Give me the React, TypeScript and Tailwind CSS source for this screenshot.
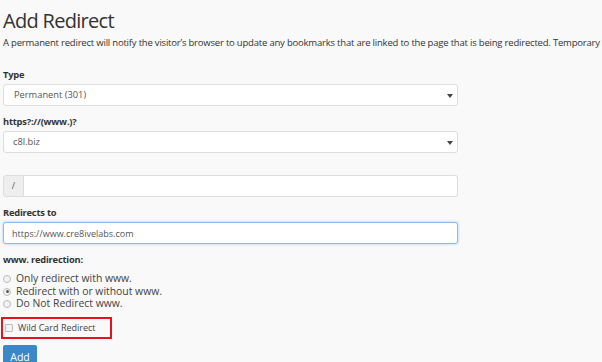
import { ChangeEvent, useState } from "react";

const font = { fontFamily: '"Open Sans", sans-serif' };

const Caret = () => (
  <svg width="6" height="5" viewBox="0 0 6 5" className="absolute right-[4px] top-[9px]">
    <path d="M0 0 H6 L3 4 Z" fill="#444" />
  </svg>
);

const App = () => {
  const [redirectTo, setRedirectTo] = useState("https://www.cre8ivelabs.com");
  const [www, setWww] = useState("both");

  const radios = [
    { id: "only", label: "Only redirect with www." },
    { id: "both", label: "Redirect with or without www." },
    { id: "none", label: "Do Not Redirect www." },
  ];

  return (
    <div
      className="w-[602px] h-[362px] overflow-hidden bg-[#f9f9f9] text-[#333] pl-[3px] pt-[5px]"
      style={font}
    >
      <h1 className="h-[28px] flex items-end text-[20px] leading-[24px] tracking-[-0.7px] font-normal text-[#333]">
        Add Redirect
      </h1>
      <p className="mt-[3px] text-[9.5px] leading-[14px] tracking-[-0.2px] whitespace-nowrap text-[#333]">
        A permanent redirect will notify the visitor’s browser to update any bookmarks that are linked to the page that is being redirected. Temporary
      </p>

      {/* TYPE */}
      <div className="mt-[18px] flex flex-col gap-[2px] w-[455px]">
        <label className="text-[9.3px] leading-[14px] font-bold tracking-[-0.2px]">Type</label>
        <div className="relative h-[22px] bg-white border border-[#ddd] rounded-[3px] flex items-center pl-[10px] text-[9.3px] text-[#555]">
          Permanent (301)
          <Caret />
        </div>
      </div>

      {/* DOMAIN */}
      <div className="mt-[9px] flex flex-col gap-[2px] w-[455px]">
        <label className="text-[9.3px] leading-[14px] font-bold tracking-[-0.2px]">https?://(www.)?</label>
        <div className="relative h-[22px] bg-white border border-[#ddd] rounded-[3px] flex items-center pl-[9px] text-[9.3px] text-[#555]">
          c8l.biz
          <Caret />
        </div>
      </div>

      {/* PATH */}
      <div className="mt-[22px] flex h-[22px] w-[455px]">
        <span className="w-[21px] flex items-center justify-center bg-[#eee] border border-[#ddd] rounded-l-[3px] text-[9px] text-[#555]">
          /
        </span>
        <input className="flex-1 bg-white border border-l-0 border-[#ddd] rounded-r-[3px] outline-none" />
      </div>

      {/* REDIRECTS TO */}
      <div className="mt-[9px] flex flex-col gap-[2px] w-[455px]">
        <label className="text-[9.3px] leading-[14px] font-bold tracking-[-0.2px]">Redirects to</label>
        <input
          value={redirectTo}
          onChange={(e: ChangeEvent<HTMLInputElement>) => setRedirectTo(e.target.value)}
          className="h-[22px] bg-white border border-[#86bdf0] rounded-[3px] pl-[8px] text-[9px] text-[#555] outline-none shadow-[0_0_3px_rgba(102,175,233,0.6)]"
          style={font}
        />
      </div>

      {/* WWW */}
      <div className="mt-[9px] text-[9.3px] leading-[14px] font-bold tracking-[-0.2px]">www. redirection:</div>
      <div className="mt-[6px] flex flex-col">
        {radios.map((r) => (
          <label key={r.id} className="flex items-center gap-[5px] h-[12.5px] text-[10.4px] text-[#444]">
            <span
              onClick={() => setWww(r.id)}
              className="w-[8px] h-[8px] rounded-full border border-[#bbb] bg-[#f3f3f3] flex items-center justify-center"
            >
              {www === r.id && <span className="w-[3px] h-[3px] rounded-full bg-[#555]" />}
            </span>
            {r.label}
          </label>
        ))}
      </div>

      {/* WILD CARD */}
      <div className="mt-[6.5px] -ml-[2px] w-[111px] h-[22px] border-2 border-[#e8121d] flex items-center pl-[2px] gap-[5px] text-[9px] text-[#444]">
        <span className="w-[8px] h-[8px] border border-[#bbb] rounded-[1px] bg-[#f3f3f3]" />
        Wild Card Redirect
      </div>

      {/* ADD */}
      <button className="mt-[6px] w-[34px] h-[24px] bg-[#3a87c9] rounded-[2px] text-white text-[10.5px] flex items-start justify-center pt-[5px]">
        Add
      </button>
    </div>
  );
};

export default App;
